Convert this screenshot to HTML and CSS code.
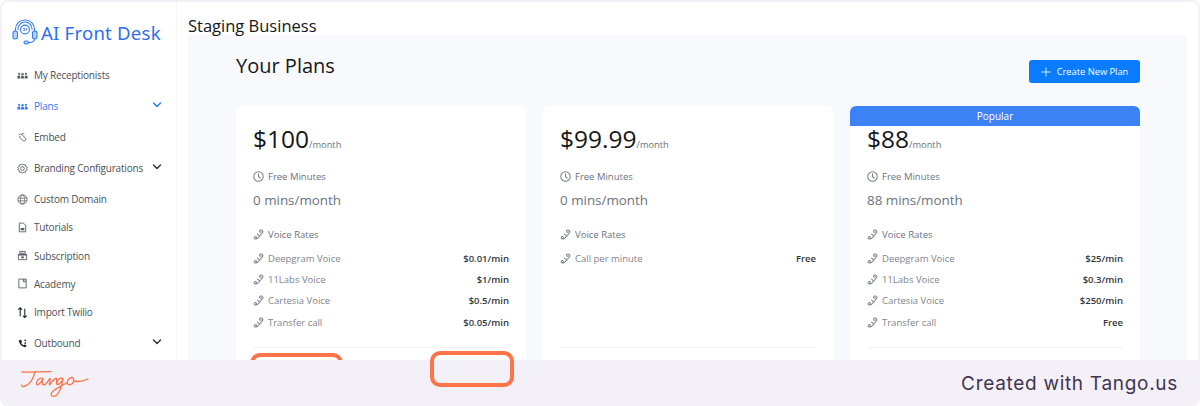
FILE: index.html
```html
<!DOCTYPE html>
<html lang="en">
<head>
<meta charset="utf-8">
<title>AI Front Desk - Plans</title>
<link rel="stylesheet" href="styles.css">
</head>
<body>
<svg class="defs" width="0" height="0" aria-hidden="true">
  <defs>
    <symbol id="i-phone" viewBox="0 0 12 12"><path d="M8.300 1.200c1.700-.6 3.200 1 2.300 2.600L6 9.300c-1.300 1.700-4 2.200-4.700.9-.5-1 .6-2.300 1.700-2 .9.300.9 1.300.3 1.700M8.300 1.200c-1.200.3-1.500 1.600-.7 2.200.6.400 1.300.2 1.600-.3M5 5.500l1.500 1.500" fill="none" stroke="currentColor" stroke-width="1.100" stroke-linecap="round"/></symbol>
    <symbol id="i-clock" viewBox="0 0 12 12"><circle cx="6" cy="6" r="5.200" fill="none" stroke="currentColor" stroke-width="1.100"/><path d="M6 2.800v3.400l2.300 1.700" fill="none" stroke="currentColor" stroke-width="1.100"/></symbol>
    <symbol id="i-team" viewBox="0 0 12 12"><g fill="currentColor"><circle cx="6" cy="4.600" r="1.300"/><circle cx="2.300" cy="4.200" r="1.200"/><circle cx="9.700" cy="4.200" r="1.200"/><path d="M4 9.300V8c0-1 .9-1.500 2-1.500S8 7 8 8v1.300zM.4 9.300V7.400c0-.9.800-1.400 1.900-1.400l1 .2v3.100zM11.600 9.300V7.400c0-.9-.8-1.400-1.900-1.400l-1 .2v3.100z"/></g></symbol>
    <symbol id="i-chev" viewBox="0 0 10 10"><path d="M1.500 3l3.500 3.500L8.500 3" fill="none" stroke="currentColor" stroke-width="1.500" stroke-linecap="round" stroke-linejoin="round"/></symbol>
  </defs>
</svg>
<div class="frame">
  <aside class="sidebar">
    <div class="brand">
      <svg class="brand-icon" viewBox="0 0 26 26" aria-hidden="true">
        <g fill="none" stroke="#2f7bf6" stroke-width="1.100">
          <path d="M3.500 13V10a9.500 9 0 0 1 19 0v3"/>
          <path d="M6 11V10a7 7 0 0 1 14 0v1"/>
          <circle cx="13" cy="10.500" r="4.400"/>
          <rect x="1" y="12" width="4.500" height="8" rx="2.200" fill="#bcd6fb"/>
          <rect x="20.500" y="12" width="4.500" height="8" rx="2.200" fill="#bcd6fb"/>
          <path d="M22.500 20c0 3-3 3.500-6 3.500"/>
          <rect x="12" y="22" width="4.500" height="3" rx="1.500" fill="#bcd6fb"/>
          <path d="M11 9.500h2v2h-2M14.500 9v2.500" stroke-width=".8"/>
        </g>
      </svg>
      <span class="brand-name">AI Front Desk</span>
    </div>
    <nav class="nav">
      <a class="nav-item gap"><svg class="nav-icon"><use href="#i-team"/></svg><span>My Receptionists</span></a>
      <a class="nav-item gap active"><svg class="nav-icon"><use href="#i-team"/></svg><span>Plans</span><svg class="chev"><use href="#i-chev"/></svg></a>
      <a class="nav-item gap"><svg class="nav-icon" viewBox="0 0 12 12"><path d="M2 3.500c1-1.500 2.500-1.500 3.500-.5l3.500 3.500c1 1 .8 2.500-.2 3s-2 .2-2.800-.6L3 6c-.5-.6 0-1.500.8-1.300" fill="none" stroke="currentColor"/><path d="M5 2.500c.8-1 2-1 3-.2" fill="none" stroke="currentColor"/></svg><span>Embed</span></a>
      <a class="nav-item gap"><svg class="nav-icon" viewBox="0 0 12 12"><path d="M6 .8l1.300 1.400 1.900-.3.400 1.900 1.700 1-.9 1.200.9 1.200-1.700 1-.4 1.900-1.900-.3L6 11.200l-1.300-1.400-1.900.3-.4-1.900-1.700-1 .9-1.200-.9-1.200 1.700-1 .4-1.900 1.900.3z" fill="none" stroke="currentColor"/><circle cx="6" cy="6" r="2" fill="none" stroke="currentColor"/></svg><span>Branding Configurations</span><svg class="chev"><use href="#i-chev"/></svg></a>
      <a class="nav-item"><svg class="nav-icon" viewBox="0 0 12 12"><circle cx="6" cy="6" r="5" fill="none" stroke="currentColor"/><ellipse cx="6" cy="6" rx="2.200" ry="5" fill="none" stroke="currentColor" stroke-width=".8"/><path d="M1.300 4.500h9.400M1.300 7.500h9.400" stroke="currentColor" stroke-width=".8"/></svg><span>Custom Domain</span></a>
      <a class="nav-item"><svg class="nav-icon" viewBox="0 0 12 12"><path d="M2.500 1.200h4.500l2.500 2.500v7H2.500z" fill="none" stroke="currentColor"/><path d="M4 6.500h4v2.500H4z" fill="currentColor"/></svg><span>Tutorials</span></a>
      <a class="nav-item"><svg class="nav-icon" viewBox="0 0 12 12"><path d="M3 1.500h6v2H3zM1.500 5h9v5.500h-9z" fill="none" stroke="currentColor"/><path d="M1.500 4h9v2h-9z" fill="currentColor"/><path d="M4.500 7h3v2h-3z" fill="currentColor"/></svg><span>Subscription</span></a>
      <a class="nav-item"><svg class="nav-icon" viewBox="0 0 12 12"><path d="M2 1.200h8v9.600H2zM7 1.200v3h2v-3" fill="none" stroke="currentColor"/></svg><span>Academy</span></a>
      <a class="nav-item gap"><svg class="nav-icon dark" viewBox="0 0 12 12"><path d="M3.500 10V.8M1.500 2.800l2-2 2 2M8.500 2v9.500M6.500 9.500l2 2 2-2" fill="none" stroke="currentColor" stroke-width="1.200"/></svg><span>Import Twilio</span></a>
      <a class="nav-item"><svg class="nav-icon dark" viewBox="0 0 12 12"><path d="M2 2.500c0 4 3.500 7.500 7.500 7.500l1-2-2.300-1-1 1c-1-.4-2.300-1.700-2.700-2.700l1-1-1-2.300z" fill="currentColor"/><circle cx="9" cy="2.500" r="1" fill="currentColor"/><circle cx="9" cy="5.500" r="1" fill="currentColor"/></svg><span>Outbound</span><svg class="chev"><use href="#i-chev"/></svg></a>
    </nav>
  </aside>
  <main class="main">
    <h1 class="business">Staging Business</h1>
    <section class="panel">
      <header class="panel-head">
        <h2 class="panel-title">Your Plans</h2>
        <button class="create-btn"><svg class="plus" viewBox="0 0 12 12" aria-hidden="true"><path d="M6 .5v11M.5 6h11" stroke="currentColor" fill="none"/></svg>Create New Plan</button>
      </header>
      <div class="plans">
        <article class="card">
          <div class="price"><span class="amount">$100</span><span class="per">/month</span></div>
          <div class="label"><svg class="icon"><use href="#i-clock"/></svg>Free Minutes</div>
          <div class="mins">0 mins/month</div>
          <div class="label"><svg class="icon"><use href="#i-phone"/></svg>Voice Rates</div>
          <ul class="rates">
            <li class="rate"><span class="rate-name"><svg class="icon"><use href="#i-phone"/></svg>Deepgram Voice</span><b>$0.01/min</b></li>
            <li class="rate"><span class="rate-name"><svg class="icon"><use href="#i-phone"/></svg>11Labs Voice</span><b>$1/min</b></li>
            <li class="rate"><span class="rate-name"><svg class="icon"><use href="#i-phone"/></svg>Cartesia Voice</span><b>$0.5/min</b></li>
            <li class="rate"><span class="rate-name"><svg class="icon"><use href="#i-phone"/></svg>Transfer call</span><b>$0.05/min</b></li>
          </ul>
          <div class="card-rule"></div>
        </article>
        <article class="card">
          <div class="price"><span class="amount">$99.99</span><span class="per">/month</span></div>
          <div class="label"><svg class="icon"><use href="#i-clock"/></svg>Free Minutes</div>
          <div class="mins">0 mins/month</div>
          <div class="label"><svg class="icon"><use href="#i-phone"/></svg>Voice Rates</div>
          <ul class="rates">
            <li class="rate"><span class="rate-name"><svg class="icon"><use href="#i-phone"/></svg>Call per minute</span><b>Free</b></li>
            <li class="rate"></li>
            <li class="rate"></li>
            <li class="rate"></li>
          </ul>
          <div class="card-rule"></div>
        </article>
        <article class="card popular">
          <div class="badge">Popular</div>
          <div class="price"><span class="amount">$88</span><span class="per">/month</span></div>
          <div class="label"><svg class="icon"><use href="#i-clock"/></svg>Free Minutes</div>
          <div class="mins">88 mins/month</div>
          <div class="label"><svg class="icon"><use href="#i-phone"/></svg>Voice Rates</div>
          <ul class="rates">
            <li class="rate"><span class="rate-name"><svg class="icon"><use href="#i-phone"/></svg>Deepgram Voice</span><b>$25/min</b></li>
            <li class="rate"><span class="rate-name"><svg class="icon"><use href="#i-phone"/></svg>11Labs Voice</span><b>$0.3/min</b></li>
            <li class="rate"><span class="rate-name"><svg class="icon"><use href="#i-phone"/></svg>Cartesia Voice</span><b>$250/min</b></li>
            <li class="rate"><span class="rate-name"><svg class="icon"><use href="#i-phone"/></svg>Transfer call</span><b>Free</b></li>
          </ul>
          <div class="card-rule"></div>
        </article>
      </div>
    </section>
  </main>
</div>
<div class="highlight hl-a"></div>
<footer class="footer">
  <svg class="tango-logo" viewBox="0 0 70 32" role="img" aria-label="Tango logo">
    <path d="M2 3c8 .6 18-.6 29-.4M15 2.600C13.500 9 10 16 4 17.500c-1.500.3-2.500-.5-2.500-1.500M23 9.500c-3.500-1.500-7 2.500-6.500 5.500.4 2.500 4.500-.5 6.500-5.500-.8 3-1.200 6.500 1 6.500 2 0 4-4.500 6-6.500.8 1.500-1 4.500-.5 6.500 2-2.500 4.500-6.500 6.500-6.500 1.500 0 0 3.500.6 5.500.5 1.200 2.500.6 4-1.500M43 9.500c-3-1.500-6.500 2-6 4.800.4 2.200 4.500.6 6-4.800-.8 6.500-3.500 16-8.500 17.700-3 1-4.500-1.500-2-4.500 3-3.500 10-6 14.500-9M52 8.500c-3 0-5.500 3.500-4.500 6 1 2.300 5 1.200 6-1.800.7-2.500-.5-4.500-2-4.200M53.500 12c4 1 9.500.3 14.500-2" fill="none" stroke="#ff7348" stroke-width="1.300" stroke-linecap="round" stroke-linejoin="round"/>
  </svg>
  <span class="tango-text">Created with Tango.us</span>
</footer>
<div class="highlight hl-b"></div>
</body>
</html>
```
FILE: styles.css
```css
* { box-sizing: border-box; }
html { margin: 0; padding: 0; background: #fff; }
body {
  margin: 0;
  width: 1200px;
  height: 406px;
  overflow: hidden;
  position: relative;
  background: #f3f1f7;
  border-radius: 8px;
  font-family: "Open Sans", "Noto Sans", sans-serif;
  display: flex;
  flex-direction: column;
  padding: 2px 2px 0;
}
.defs { position: absolute; }
.frame {
  height: 358px;
  display: flex;
  background: #fff;
  border-radius: 6px 6px 0 0;
  overflow: hidden;
}
.sidebar {
  width: 175px;
  flex: none;
  border-right: 1px solid #f5f5f8;
  padding: 15px 0 0 10px;
}
.brand { display: flex; align-items: center; gap: 3px; height: 30px; }
.brand-icon { width: 26px; height: 26px; flex: none; }
.brand-name { font-family: "Noto Sans", sans-serif; font-size: 18.600px; color: #2f6ff0; letter-spacing: .2px; white-space: nowrap; }
.nav { margin-top: 14px; padding-left: 5px; }
.nav-item {
  display: flex;
  align-items: center;
  height: 28.300px;
  color: #4a4f57;
  font-size: 10px;
  font-weight: 500;
  letter-spacing: -.2px;
  white-space: nowrap;
}
.gap { margin-bottom: 2.700px; }
.nav-item.active { color: #2f7bf6; }
.nav-icon { width: 11px; height: 11px; flex: none; margin-right: 6px; color: #5c6168; }
.active .nav-icon { color: #2f7bf6; }
.nav-icon.dark { color: #23272e; }
.chev { width: 10px; height: 10px; margin-left: auto; margin-right: 14px; color: #31363d; margin-bottom: 3px; }
.active .chev { color: #2f7bf6; }

.main { flex: 1; padding: 14px 11px 0 11px; min-width: 0; }
.business { margin: 0; font-size: 16.500px; line-height: 19px; font-weight: 500; color: #15171a; }
.panel {
  background: #f8f9fc;
  height: 340px;
  padding: 0 47px 0 48px;
  overflow: hidden;
}
.panel-head {
  display: flex;
  align-items: center;
  justify-content: space-between;
  height: 71px;
  padding-bottom: 11px;
}
.panel-title { margin: 0; font-size: 20px; font-weight: 500; color: #15171a; }
.create-btn {
  width: 111px;
  height: 23px;
  margin-top: 13px;
  border: 0;
  border-radius: 3px;
  background: #0a7cff;
  color: #fff;
  font: 500 9.300px "Open Sans", sans-serif;
  display: flex;
  align-items: center;
  justify-content: center;
  gap: 6px;
  padding: 0;
}
.plus { width: 10px; height: 10px; }
.plans { display: grid; grid-template-columns: repeat(3, 290px); gap: 17px; }
.card {
  height: 300px;
  background: #fff;
  border-radius: 6px;
  padding: 16px 17px 0;
}
.popular { position: relative; }
.badge {
  position: absolute;
  left: 0;
  right: 0;
  top: 0;
  height: 20px;
  background: #3b82f6;
  color: #fff;
  border-radius: 6px 6px 0 0;
  font-size: 10px;
  line-height: 20px;
  font-weight: 500;
  text-align: center;
}
.price { display: flex; align-items: baseline; height: 34px; color: #15171a; }
.amount { font-size: 24.500px; line-height: 34px; font-weight: 400; }
.per { font-size: 9.300px; color: #6b7280; }
.label {
  display: flex;
  align-items: center;
  height: 14px;
  margin-top: 13px;
  color: #6b7280;
  font-size: 9.500px;
}
.icon { width: 11px; height: 11px; margin-right: 4px; color: #7a7f87; flex: none; }
.mins { margin-top: 7px; height: 20px; line-height: 20px; font-size: 13.400px; color: #6b7280; }
.mins + .label { margin-top: 17px; }
.rates { list-style: none; margin: 7px 0 0; padding: 0; }
.rate { display: flex; justify-content: space-between; align-items: center; height: 21.200px; font-size: 9.500px; color: #7f848c; }
.rate b { color: #33373d; font-weight: 600; }
.rate-name { display: flex; align-items: center; }
.card-rule { margin-top: 14px; height: 1px; background: #f3f4f6; }

.footer {
  height: 46px;
  flex: none;
  margin: 0 -2px;
  display: flex;
  align-items: center;
  justify-content: space-between;
  padding: 0 22px 0 20px;
  background: #f3f1f7;
  position: relative;
}
.tango-logo { width: 70px; height: 32px; margin-top: 4px; }
.tango-text { font-family: "Inter", sans-serif; font-size: 19px; letter-spacing: .7px; color: #433454; }
.highlight {
  position: absolute;
  border: 4px solid #ff7348;
  border-radius: 10px;
}
.hl-a { left: 250px; top: 353px; width: 93px; height: 30px; }
.hl-b { left: 430px; top: 351px; width: 84px; height: 36px; }
```
